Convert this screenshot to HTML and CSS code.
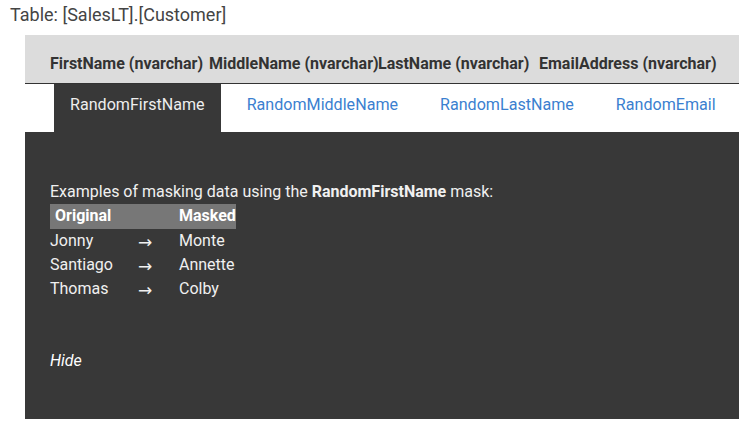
FILE: index.html
```html
<!DOCTYPE html>
<html lang="en">
<head>
    <meta charset="UTF-8">
    <title>Masking preview</title>
    <link rel="stylesheet" href="styles.css">
</head>
<body>
  <div class="title">Table: [SalesLT].[Customer]</div>

  <div class="mask-box">
    <div class="columns">
        <span class="col c1">FirstName (nvarchar)</span>
        <span class="col c2">MiddleName (nvarchar)</span>
        <span class="col c3">LastName (nvarchar)</span>
        <span class="col c4">EmailAddress (nvarchar)</span>
    </div>

    <ul class="tabs">
        <li class="active"><a href="#">RandomFirstName</a></li>
        <li><a href="#">RandomMiddleName</a></li>
        <li><a href="#">RandomLastName</a></li>
        <li><a href="#">RandomEmail</a></li>
    </ul>

    <div class="content">
        <p class="intro">Examples of masking data using the <b>RandomFirstName</b> mask:</p>
        <div class="examples">
            <div class="head h1">Original</div>
            <div class="head"></div>
            <div class="head">Masked</div>

            <div>Jonny</div><div class="arrow">&rarr;</div><div>Monte</div>
            <div>Santiago</div><div class="arrow">&rarr;</div><div>Annette</div>
            <div>Thomas</div><div class="arrow">&rarr;</div><div>Colby</div>
        </div>
        <a class="hide" href="#">Hide</a>
    </div>
  </div>
</body>
</html>
```

FILE: styles.css
```css
* {
    margin: 0;
    padding: 0;
    box-sizing: border-box;
}

body {
    font-family: Roboto, "Liberation Sans", sans-serif;
    background: #fff;
    color: #333;
}

.title {
    padding: 4px 10px 0;
    height: 35px;
    font-size: 18px;
    color: #444;
}

.mask-box {
    margin-left: 25px;
    width: 714px;
}

/* шапка с колонками */
.columns {
    display: flex;
    height: 49px;
    padding: 19px 0 0 25px;
    background-color: #dcdcdc;
    border-bottom: 1px solid #333;
    font-size: 16px;
    font-weight: bold;
    color: #333;
}

.col { white-space: nowrap; }
.c1 { width: 159px; }
.c2 { width: 169px; }
.c3 { width: 161px; }

/* вкладки */
.tabs {
    display: flex;
    list-style-type: none;
    height: 48px;
    padding-left: 29px;
}

.tabs li {
    margin-right: 10px;
}

.tabs li a {
    display: block;
    height: 48px;
    padding: 11px 16px 0;
    font-size: 16.1px;
    color: #3b7fd0;
    text-decoration: none;
}

.tabs li.active {
    background-color: #383838;
}

.tabs li.active a {
    color: #eee;
}

.content {
    height: 287px;
    padding: 48px 25px 0;
    background-color: #383838;
    color: #f0f0f0;
    font-size: 16px;
}

.intro {
    line-height: 24px;
}

.examples {
    display: grid;
    grid-template-columns: 88px 41px auto;
    grid-template-rows: 25px;
    grid-auto-rows: 24px;
    justify-content: start;
    line-height: 24px;
}

.head {
    background-color: #777;
    color: #fff;
    font-weight: bold;
}

.h1 { padding-left: 5px; }

.arrow {
    font-family: "DejaVu Sans", sans-serif;
    font-size: 17px;
    line-height: 26px;
    height: 24px;
    overflow: hidden;
}

.hide {
    display: inline-block;
    margin-top: 50px;
    font-style: italic;
    color: #fff;
    text-decoration: none;
}
```
